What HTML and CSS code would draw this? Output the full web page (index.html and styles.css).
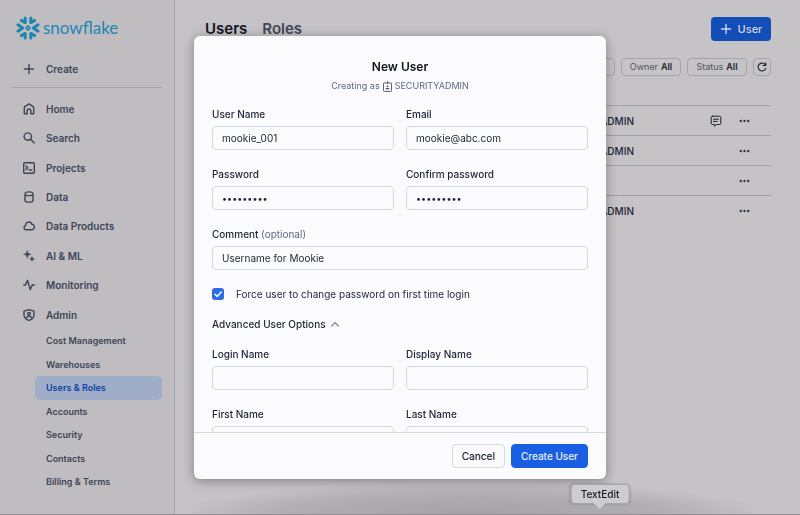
FILE: index.html
```
<!DOCTYPE html>
<html lang="en">
<head>
    <meta charset="UTF-8">
    <title>Users &amp; Roles - Snowflake</title>
    <meta name="viewport" content="width=device-width, initial-scale=1">
    <link rel="stylesheet" href="styles.css">
</head>
<body>
    <div class="page">
        <aside class="sidebar">
            <a class="logo" href="#">
                <svg class="logo-mark" viewBox="0 0 24 24" fill="none" stroke="currentColor" stroke-width="3" stroke-linecap="round" stroke-linejoin="round">
                    <path d="M9.2 1.9v4.7L5.400 4.400M14.800 1.900v4.700l3.800-2.200M9.200 22.100v-4.700l-3.800 2.200M14.800 22.100v-4.700l3.800 2.200M2 8.800L6.600 12 2 15.200M22 8.800L17.400 12l4.600 3.200"/>
                    <path d="M12 9.900l2.100 2.100-2.100 2.100L9.900 12z" stroke-width="1.500"/>
                </svg>
                <span>snowflake</span>
            </a>
            <button class="create" type="button">
                <svg class="icon" viewBox="0 0 12 12"><path d="M6 1.5v9M1.5 6h9"/></svg>
                Create
            </button>
            <ul class="nav">
                <li><a href="#"><svg class="icon" viewBox="0 0 12 12"><path d="M1.300 4.600Q1.300 4 1.800 3.600L6 .9l4.200 2.700q.5.4.5 1v6.100H7.800V7.800a1.800 1.800 0 0 0-3.600 0v2.900H1.300z"/></svg>Home</a></li>
                <li><a href="#"><svg class="icon" viewBox="0 0 12 12"><circle cx="4.8" cy="4.6" r="3.7"/><path d="M7.5 7.3l3.7 3.7"/></svg>Search</a></li>
                <li><a href="#"><svg class="icon" viewBox="0 0 12 12"><rect x=".7" y=".7" width="10.6" height="10.6" rx="1"/><path d="M3 4l1.8 1.8L3 7.6M6.2 8h2.5"/></svg>Projects</a></li>
                <li><a href="#"><svg class="icon" viewBox="0 0 12 12"><path d="M2 2.8C2 .2 10 .2 10 2.8v6.4c0 2.6-8 2.6-8 0zM2 3.4c.6 1.6 7.4 1.6 8 0"/></svg>Data</a></li>
                <li><a href="#"><svg class="icon" viewBox="0 0 12 12"><path d="M3 9.800a2.200 2.200 0 0 1-.4-4.300C2.500 3.500 4 2 5.800 2c1.500 0 2.700.9 3.100 2.300C10.500 4.400 11.400 5.700 11.400 7c0 1.600-1.200 2.800-2.700 2.800z"/></svg>Data Products</a></li>
                <li><a href="#"><svg class="icon icon-solid" viewBox="0 0 12 12"><path d="M4.300.6l1 2.700 2.900 1-2.900 1-1 2.900-1-2.900-2.800-1 2.800-1zM9 6.400l.7 1.900 1.900.7-1.900.7L9 11.600l-.7-1.900L6.400 9l1.900-.7z"/></svg>AI &amp; ML</a></li>
                <li><a href="#"><svg class="icon" viewBox="0 0 12 12"><path d="M.7 6h1.800l1.900-4.700 2.900 9.200L9.200 6h2.100"/></svg>Monitoring</a></li>
                <li><a href="#"><svg class="icon" viewBox="0 0 12 12"><path d="M6 .7l5 1.500v3.500c0 2.900-1.900 4.700-5 5.700-3.100-1-5-2.800-5-5.700V2.200zM3.500 8.500c.8-1.700 4.200-1.700 5 0"/><circle cx="6" cy="4.800" r="1.400"/></svg>Admin</a></li>
            </ul>
            <ul class="subnav">
                <li><a href="#">Cost Management</a></li>
                <li><a href="#">Warehouses</a></li>
                <li><a class="active" href="#">Users &amp; Roles</a></li>
                <li><a href="#">Accounts</a></li>
                <li><a href="#">Security</a></li>
                <li><a href="#">Contacts</a></li>
                <li><a href="#">Billing &amp; Terms</a></li>
            </ul>
        </aside>

        <main class="main">
            <header class="topbar">
                <nav class="tabs">
                    <a class="current" href="#">Users</a>
                    <a href="#">Roles</a>
                </nav>
                <button class="add-user" type="button">
                    <svg class="icon" viewBox="0 0 12 12"><path d="M6 1.500v9M1.500 6h9"/></svg>
                    User
                </button>
            </header>
            <div class="filters">
                <button class="filter" type="button" aria-label="Filter"></button>
                <button class="filter" type="button">Owner <b>All</b></button>
                <button class="filter" type="button">Status <b>All</b></button>
                <button class="filter refresh" type="button" aria-label="Refresh">
                    <svg class="icon" viewBox="0 0 12 12"><path d="M10.500 1v3.200H7.300M10.300 4A4.700 4.700 0 1 0 10.500 7.600"/></svg>
                </button>
            </div>
            <table class="users">
                <tbody>
                    <tr>
                        <td class="owner">ACCOUNTADMIN</td>
                        <td class="note"><svg class="icon" viewBox="0 0 12 12"><path d="M2.500 1.200h7A1.300 1.300 0 0 1 10.800 2.500v5.700A1.300 1.300 0 0 1 9.500 9.500H6.300L4.500 11.300V9.500h-2A1.300 1.300 0 0 1 1.200 8.200V2.500A1.300 1.300 0 0 1 2.500 1.200zM3.500 4.200h5M3.500 6.400h3.500"/></svg></td>
                        <td class="more"><button type="button" aria-label="More"><svg class="dots" viewBox="0 0 10 4"><circle cx="1.300" cy="2" r="1.200"/><circle cx="5" cy="2" r="1.200"/><circle cx="8.700" cy="2" r="1.200"/></svg></button></td>
                    </tr>
                    <tr>
                        <td class="owner">ACCOUNTADMIN</td>
                        <td class="note"></td>
                        <td class="more"><button type="button" aria-label="More"><svg class="dots" viewBox="0 0 10 4"><circle cx="1.300" cy="2" r="1.200"/><circle cx="5" cy="2" r="1.200"/><circle cx="8.700" cy="2" r="1.200"/></svg></button></td>
                    </tr>
                    <tr>
                        <td class="owner"></td>
                        <td class="note"></td>
                        <td class="more"><button type="button" aria-label="More"><svg class="dots" viewBox="0 0 10 4"><circle cx="1.300" cy="2" r="1.200"/><circle cx="5" cy="2" r="1.200"/><circle cx="8.700" cy="2" r="1.200"/></svg></button></td>
                    </tr>
                    <tr>
                        <td class="owner">ACCOUNTADMIN</td>
                        <td class="note"></td>
                        <td class="more"><button type="button" aria-label="More"><svg class="dots" viewBox="0 0 10 4"><circle cx="1.300" cy="2" r="1.200"/><circle cx="5" cy="2" r="1.200"/><circle cx="8.700" cy="2" r="1.200"/></svg></button></td>
                    </tr>
                </tbody>
            </table>
        </main>
    </div>

    <div class="dock-shadow"></div>

    <div class="overlay">
        <form class="modal" role="dialog" aria-labelledby="modalTitle">
            <div class="modal-head">
                <h2 id="modalTitle">New User</h2>
                <p>Creating as
                    <svg class="badge" viewBox="0 0 10 12"><path d="M1.500 2h7a1 1 0 0 1 1 1v7.500a1 1 0 0 1-1 1h-7a1 1 0 0 1-1-1V3a1 1 0 0 1 1-1zM5 .3V3"/><path class="fill" d="M2.600 9c.2-1.800 4.600-1.800 4.800 0z"/><circle class="fill" cx="5" cy="5.800" r="1"/></svg>
                    <span class="role">SECURITYADMIN</span>
                </p>
            </div>
            <div class="modal-body">
                <div class="row">
                    <div class="field">
                        <label for="userName">User Name</label>
                        <input type="text" id="userName" value="mookie_001">
                    </div>
                    <div class="field">
                        <label for="email">Email</label>
                        <input type="text" id="email" value="mookie@abc.com">
                    </div>
                </div>
                <div class="row">
                    <div class="field">
                        <label for="password">Password</label>
                        <input type="password" id="password" value="mookie001">
                    </div>
                    <div class="field">
                        <label for="confirm">Confirm password</label>
                        <input type="password" id="confirm" value="mookie001">
                    </div>
                </div>
                <div class="row">
                    <div class="field">
                        <label for="comment">Comment <span class="optional">(optional)</span></label>
                        <input type="text" id="comment" value="Username for Mookie">
                    </div>
                </div>
                <div class="check">
                    <input type="checkbox" id="force" checked>
                    <label for="force">Force user to change password on first time login</label>
                </div>
                <button class="advanced" type="button">
                    Advanced User Options
                    <svg class="chevron" viewBox="0 0 8 6"><path d="M.7 5L4 1.500 7.300 5"/></svg>
                </button>
                <div class="row">
                    <div class="field">
                        <label for="loginName">Login Name</label>
                        <input type="text" id="loginName">
                    </div>
                    <div class="field">
                        <label for="displayName">Display Name</label>
                        <input type="text" id="displayName">
                    </div>
                </div>
                <div class="row">
                    <div class="field">
                        <label for="firstName">First Name</label>
                        <input type="text" id="firstName">
                    </div>
                    <div class="field">
                        <label for="lastName">Last Name</label>
                        <input type="text" id="lastName">
                    </div>
                </div>
            </div>
            <div class="modal-foot">
                <button class="btn" type="button">Cancel</button>
                <button class="btn btn-primary" type="button">Create User</button>
            </div>
        </form>
    </div>

    <div class="tooltip">TextEdit</div>
</body>
</html>
```
FILE: styles.css
```
* {
    box-sizing: border-box;
}
body {
    margin: 0;
    font-family: Inter, "Liberation Sans", sans-serif;
    font-size: 10px;
    line-height: 16px;
    color: #1d2433;
    background: #c5c3c5;
}
button, input {
    font: inherit;
    color: inherit;
}
a {
    color: inherit;
    text-decoration: none;
}
ul {
    list-style: none;
    margin: 0;
    padding: 0;
}
.icon {
    width: 12px;
    height: 12px;
    flex: none;
    fill: none;
    stroke: currentColor;
    stroke-width: 1.4;
    stroke-linecap: round;
    stroke-linejoin: round;
}
.icon-solid {
    fill: currentColor;
    stroke-width: 0.3;
}
.page {
    display: flex;
    height: 100vh;
    border-bottom: 1px solid #8f8d91;
}

/* Sidebar */
.sidebar {
    display: flex;
    flex-direction: column;
    width: 175px;
    flex: none;
    padding: 16px 12px 20px 11px;
    background: #bfbdbf;
    border-right: 1px solid #a3a5ad;
    color: #3c4559;
    font-weight: 600;
}
.logo {
    display: flex;
    align-items: center;
    gap: 3px;
    height: 24px;
    padding-left: 5px;
    color: #1d86b3;
    font-family: Lato, sans-serif;
    font-size: 17px;
    font-weight: 400;
}
.logo-mark {
    width: 24px;
    height: 24px;
}
.create {
    display: flex;
    align-items: center;
    gap: 11px;
    height: 48px;
    padding: 10px 12px 0;
    margin: 0 0 6px;
    background: none;
    border: none;
    border-bottom: 1px solid #a3a5ad;
}
/* 8 items against 7 smaller ones, 5:4 in height */
.nav {
    display: flex;
    flex-direction: column;
    flex: 40 1 0;
}
.subnav {
    display: flex;
    flex-direction: column;
    flex: 28 1 0;
    padding-left: 24px;
    font-size: 9px;
}
.nav li, .subnav li {
    flex: 1;
    display: flex;
}
.nav a, .subnav a {
    display: flex;
    align-items: center;
    flex: 1;
}
.nav a {
    gap: 11px;
    padding-left: 12px;
}
.subnav a {
    padding-left: 11px;
    border-radius: 5px;
}
.subnav .active {
    background: #9fadc9;
    color: #0c43a5;
}

/* Users page */
.main {
    flex: 1;
    min-width: 0;
    padding: 17px 29px 0 30px;
}
.topbar {
    display: flex;
    align-items: center;
    justify-content: space-between;
}
.tabs {
    display: flex;
    gap: 15px;
    font-size: 15px;
    font-weight: 600;
    color: #3f475c;
}
.tabs .current {
    color: #10151f;
}
.add-user {
    display: flex;
    align-items: center;
    justify-content: center;
    gap: 6px;
    width: 60px;
    height: 24px;
    padding: 0;
    border: none;
    border-radius: 4px;
    background: #134db8;
    color: #d3d8e3;
    font-size: 11px;
    font-weight: 500;
}
.filters {
    display: flex;
    justify-content: flex-end;
    gap: 6px;
    margin-top: 17px;
}
.filter {
    display: flex;
    align-items: center;
    justify-content: center;
    gap: 3px;
    width: 60px;
    height: 18px;
    padding: 0;
    background: none;
    border: 1px solid #a3a5ad;
    border-radius: 4px;
    font-size: 9px;
    color: #4c5568;
}
.filter b {
    font-weight: 600;
    color: #1d2433;
}
.refresh {
    width: 18px;
    color: #1d2433;
}
.refresh .icon {
    width: 10px;
    height: 10px;
}
.users {
    width: 100%;
    margin-top: 29px;
    border-collapse: collapse;
    font-weight: 500;
}
.users td {
    height: 30px;
    padding: 0;
    border-top: 1px solid #9c9fa6;
}
.users .owner {
    text-align: right;
}
.users .note {
    width: 88px;
    text-align: right;
}
.users .icon {
    display: block;
    margin-left: auto;
    stroke-width: 1;
}
.users .more {
    width: 49px;
    padding-left: 17px;
}
.more button {
    display: block;
    padding: 0;
    border: none;
    background: none;
}
.dots {
    display: block;
    width: 11px;
    height: 4px;
    fill: #2f384b;
}

/* Shadow along the bottom edge of the window */
.dock-shadow {
    position: fixed;
    left: 22%;
    right: 4%;
    bottom: 1px;
    height: 32px;
    background: radial-gradient(ellipse at bottom, rgba(0, 0, 0, 0.16), rgba(0, 0, 0, 0.1) 45%, rgba(0, 0, 0, 0) 70%);
}

/* New user dialog */
.overlay {
    position: fixed;
    inset: 0;
    display: flex;
    align-items: center;
    justify-content: center;
}
.modal {
    display: flex;
    flex-direction: column;
    width: 412px;
    max-height: calc(100vh - 72px);
    background: #fbfafc;
    border-radius: 6px;
    box-shadow: 0 2px 12px rgba(0, 0, 0, 0.35);
    overflow: hidden;
}
.modal-head {
    padding: 23px 18px 12px;
    text-align: center;
}
.modal-head h2 {
    margin: 0 0 3px;
    font-size: 12px;
    line-height: 16px;
    font-weight: 600;
    color: #10151f;
}
.modal-head p {
    display: flex;
    align-items: center;
    justify-content: center;
    gap: 3px;
    margin: 0;
    font-size: 9px;
    color: #5d6a85;
}
.badge {
    width: 9px;
    height: 11px;
    fill: none;
    stroke: #3f4a63;
}
.badge .fill {
    fill: #3f4a63;
    stroke: none;
}
.modal-body {
    flex: 1;
    min-height: 0;
    padding: 0 18px;
    overflow: hidden;
}
.row {
    display: flex;
    gap: 12px;
    margin-bottom: 16px;
}
.field {
    display: flex;
    flex-direction: column;
    flex: 1;
    gap: 4px;
    min-width: 0;
}
.field label {
    font-weight: 500;
}
.optional {
    color: #5d6a85;
    font-weight: 400;
}
.field input {
    width: 100%;
    height: 24px;
    padding: 0 9px;
    background: #fbfafc;
    border: 1px solid #d5d9e4;
    border-radius: 4px;
    outline: none;
}
.field input[type="password"] {
    font-size: 9px;
}
.check {
    display: flex;
    align-items: center;
    gap: 12px;
    margin-bottom: 14px;
}
.check input {
    appearance: none;
    width: 12px;
    height: 12px;
    margin: 0;
    border-radius: 3px;
}
.check input:checked {
    background: #2a6be6 url("data:image/svg+xml,%3Csvg xmlns='http://www.w3.org/2000/svg' viewBox='0 0 12 12'%3E%3Cpath d='M3 6.200l2.200 2.200L9.200 4' fill='none' stroke='white' stroke-width='1.500' stroke-linecap='round' stroke-linejoin='round'/%3E%3C/svg%3E");
}
.advanced {
    display: flex;
    align-items: center;
    gap: 5px;
    padding: 0;
    margin-bottom: 14px;
    background: none;
    border: none;
    font-weight: 500;
}
.chevron {
    width: 8px;
    height: 6px;
    fill: none;
    stroke: #7f8ba8;
    stroke-width: 1.2;
    stroke-linecap: round;
    stroke-linejoin: round;
}
.modal-foot {
    display: flex;
    justify-content: flex-end;
    gap: 6px;
    padding: 11px 18px;
    border-top: 1px solid #d5d9e4;
}
.btn {
    height: 24px;
    padding: 0 9px;
    background: #fbfafc;
    border: 1px solid #d5d9e4;
    border-radius: 4px;
    font-weight: 500;
}
.btn-primary {
    background: #1a5fe3;
    border-color: #1a5fe3;
    color: #e9effc;
}

/* Dock tooltip */
.tooltip {
    position: fixed;
    left: 75%;
    bottom: 11px;
    transform: translateX(-50%);
    padding: 1px 9px;
    background: #cdccce;
    border: 1px solid #a5a4a7;
    border-radius: 4px;
    box-shadow: 0 0 3px rgba(0, 0, 0, 0.2);
    color: #1b1b1d;
    font-weight: 500;
}
.tooltip::after {
    content: "";
    position: absolute;
    left: 50%;
    top: 100%;
    margin-left: -6px;
    border: 6px solid transparent;
    border-top-color: #cdccce;
    border-bottom: none;
}
```
